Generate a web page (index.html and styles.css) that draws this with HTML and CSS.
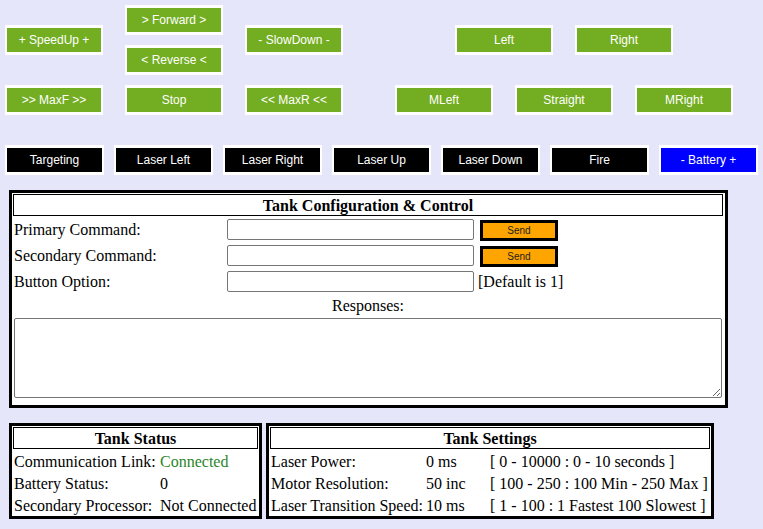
FILE: index.html
```html
<!DOCTYPE html>
<html>
<head>
<meta charset="utf-8">
<title>Tank Control</title>
<link rel="stylesheet" href="styles.css">
</head>
<body>
<div class="controls">
  <div class="drive">
    <button class="btn green speed">+ SpeedUp +</button>
    <button class="btn green fwd">&gt; Forward &gt;</button>
    <button class="btn green slow">- SlowDown -</button>
    <button class="btn green rev">&lt; Reverse &lt;</button>
    <button class="btn green maxf">&gt;&gt; MaxF &gt;&gt;</button>
    <button class="btn green stop">Stop</button>
    <button class="btn green maxr">&lt;&lt; MaxR &lt;&lt;</button>
  </div>
  <div class="steer">
    <div class="steer-top">
      <button class="btn green">Left</button>
      <button class="btn green">Right</button>
    </div>
    <div class="steer-bottom">
      <button class="btn green">MLeft</button>
      <button class="btn green">Straight</button>
      <button class="btn green">MRight</button>
    </div>
  </div>
</div>

<div class="laser-row">
  <button class="btn black">Targeting</button>
  <button class="btn black">Laser Left</button>
  <button class="btn black">Laser Right</button>
  <button class="btn black">Laser Up</button>
  <button class="btn black">Laser Down</button>
  <button class="btn black">Fire</button>
  <button class="btn blue">- Battery +</button>
</div>

<div class="config">
  <div class="box-title">Tank Configuration &amp; Control</div>
  <div class="form">
    <div class="label">Primary Command:</div>
    <div class="field"><input class="text-in" type="text"></div>
    <div class="extra"><button class="send">Send</button></div>

    <div class="label">Secondary Command:</div>
    <div class="field"><input class="text-in" type="text"></div>
    <div class="extra"><button class="send">Send</button></div>

    <div class="label">Button Option:</div>
    <div class="field"><input class="text-in" type="text"></div>
    <div class="extra note">[Default is 1]</div>
  </div>
  <div class="responses-label">Responses:</div>
  <textarea class="responses"></textarea>
</div>

<div class="panels">
  <div class="panel status">
    <div class="box-title">Tank Status</div>
    <div class="rows status-rows">
      <div>Communication Link:</div><div class="ok">Connected</div>
      <div>Battery Status:</div><div>0</div>
      <div>Secondary Processor:</div><div>Not Connected</div>
    </div>
  </div>
  <div class="panel settings">
    <div class="box-title">Tank Settings</div>
    <div class="rows settings-rows">
      <div>Laser Power:</div><div>0 ms</div><div>[ 0 - 10000 : 0 - 10 seconds ]</div>
      <div>Motor Resolution:</div><div>50 inc</div><div>[ 100 - 250 : 100 Min - 250 Max ]</div>
      <div>Laser Transition Speed:</div><div>10 ms</div><div>[ 1 - 100 : 1 Fastest 100 Slowest ]</div>
    </div>
  </div>
</div>
</body>
</html>
```

FILE: styles.css
```css
html {
  background: #e6e6fa;
}

body {
  margin: 0;
  font-family: "Liberation Serif", "Times New Roman", serif;
  font-size: 16px;
  color: #000;
}

/* ---------- buttons ---------- */
.btn {
  box-sizing: border-box;
  width: 98px;
  height: 30px;
  padding: 0;
  margin: 0;
  border-style: solid;
  border-color: #fff;
  border-width: 3px 2px;
  font-family: "Liberation Sans", Arial, sans-serif;
  font-size: 12px;
  color: #fff;
  text-align: center;
  cursor: pointer;
}

.green { background: #73ad21; }
.black { background: #000; }
.blue  { background: #0000ff; }

.controls {
  display: flex;
  gap: 52px;
  padding: 5px 0 0 5px;
}

.drive {
  display: grid;
  grid-template-columns: repeat(3, 98px);
  grid-template-rows: repeat(3, 30px);
  column-gap: 22px;
  row-gap: 10px;
}

.speed { grid-column: 1; grid-row: 1 / 3; align-self: center; }
.fwd   { grid-column: 2; grid-row: 1; }
.slow  { grid-column: 3; grid-row: 1 / 3; align-self: center; }
.rev   { grid-column: 2; grid-row: 2; }
.maxf  { grid-column: 1; grid-row: 3; }
.stop  { grid-column: 2; grid-row: 3; }
.maxr  { grid-column: 3; grid-row: 3; }

.steer {
  display: flex;
  flex-direction: column;
  width: 338px;
}

.steer-top {
  height: 70px;
  display: flex;
  justify-content: center;
  align-items: center;
  gap: 22px;
}

.steer-bottom {
  margin-top: 10px;
  display: flex;
  gap: 22px;
}

.laser-row {
  display: flex;
  gap: 10px;
  margin-top: 30px;
  padding-left: 5px;
}

.laser-row .btn {
  width: 99px;
}

/* ---------- boxes ---------- */
.config,
.panel {
  box-sizing: border-box;
  background: #fff;
  border: 3px solid #000;
}

.box-title {
  border: 1px solid #000;
  text-align: center;
  font-weight: bold;
  padding-top: 2px;
  line-height: 18px;
}

.config {
  width: 719px;
  margin: 15px 0 0 9px;
  padding: 1px 2px 1px 1px;
}

.form {
  display: grid;
  grid-template-columns: 214px 251px 1fr;
  grid-auto-rows: 26px;
  align-items: start;
}

.label {
  padding: 5px 0 0 1px;
  line-height: 18px;
}

.text-in {
  box-sizing: border-box;
  display: block;
  width: 247px;
  height: 21px;
  margin: 3px 0 0 0;
  padding: 1px 2px;
  border: 1px solid #767676;
  border-radius: 2px;
  background: #fff;
}

.note {
  padding-top: 5px;
  line-height: 18px;
}

.send {
  box-sizing: border-box;
  display: block;
  width: 78px;
  height: 21px;
  margin: 4px 0 0 2px;
  padding: 0;
  border: 3px solid #000;
  background: #ffa500;
  font-family: "Liberation Sans", Arial, sans-serif;
  font-size: 10px;
  color: #222;
  cursor: pointer;
}

.responses-label {
  text-align: center;
  padding-top: 3px;
  line-height: 18px;
}

.responses {
  box-sizing: border-box;
  display: block;
  width: 708px;
  height: 80px;
  margin: 3px 0 6px 1px;
  border: 1px solid #767676;
  border-radius: 2px;
  background: #fff;
}

.panels {
  display: flex;
  gap: 4px;
  margin-top: 15px;
  padding-left: 9px;
}

.panel {
  padding: 1px;
}

.status { width: 253px; }
.settings { width: 448px; }

.rows {
  display: grid;
  grid-auto-rows: 22px;
  white-space: nowrap;
}

.rows > div {
  padding: 4px 0 0 1px;
  line-height: 18px;
}

.status-rows {
  grid-template-columns: 146px auto;
}

.settings-rows {
  grid-template-columns: 155px 64px auto;
}

.ok {
  color: #2a862a;
}
```
